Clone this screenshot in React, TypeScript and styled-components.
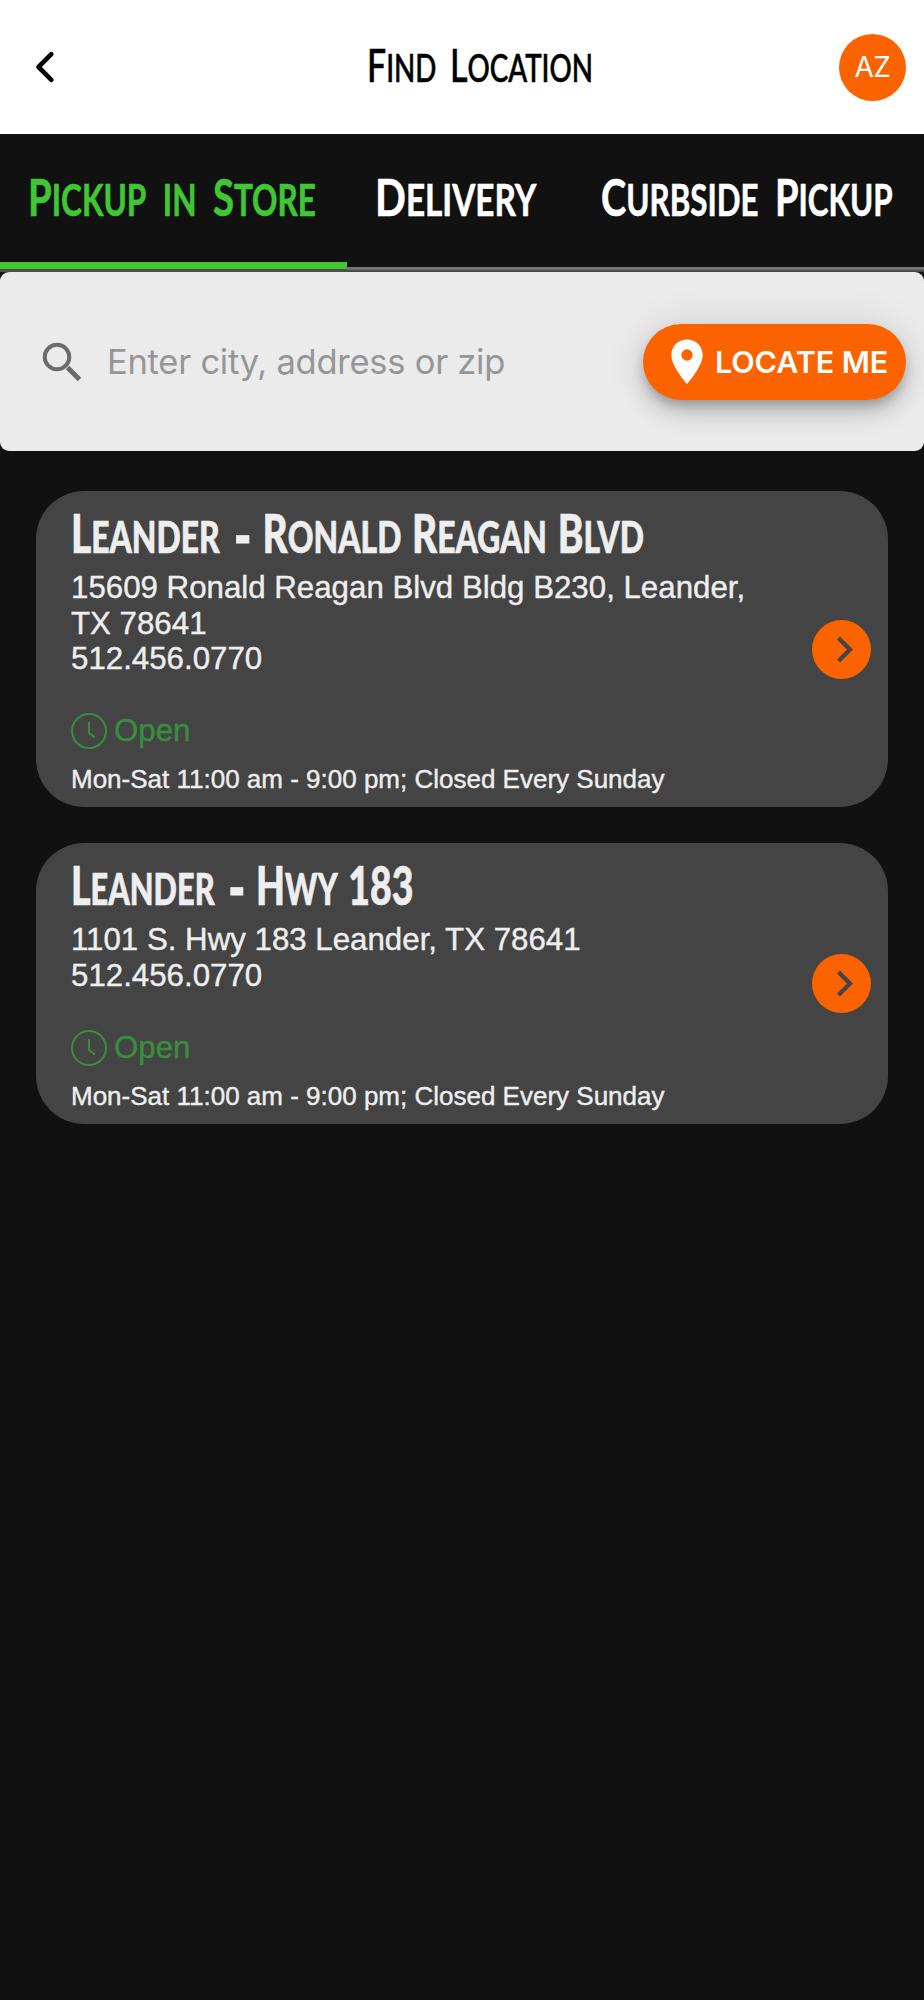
import React from "react";
import styled, { createGlobalStyle } from "styled-components";

const GlobalStyle = createGlobalStyle`
  *, *::before, *::after { box-sizing: border-box; }
  body { margin: 0; background: #111; }
  button, input { font: inherit; border: 0; background: none; padding: 0; margin: 0; }
`;

const Page = styled.div`
  width: 100%;
  min-height: 2000px;
  background: #111;
  color: #eee;
  font-family: "Liberation Sans", Arial, sans-serif;
  overflow-x: hidden;
`;

const Header = styled.header`
  display: grid;
  grid-template-columns: 333px 224px 1fr;
  align-items: center;
  height: 134px;
  padding: 0 18px 0 34px;
  background: #fff;
  color: #000;
`;

const BackButton = styled.button`
  display: flex;
  width: 22px;
  height: 34px;
`;

const Avatar = styled.div`
  display: flex;
  align-items: center;
  justify-content: center;
  justify-self: end;
  width: 67px;
  height: 67px;
  border-radius: 50%;
  background: #fb6200;
  color: #fff;
  font: 400 28px/67px Inter, sans-serif;
  letter-spacing: -0.5px;
`;

/* Condensed lettering: laid out at natural width, then squeezed into $width. */
const DisplayText = styled.span<{
  $size: number;
  $width: number;
  $height: number;
  $weight: number;
  $squeeze: number;
  $gap: number;
}>`
  display: block;
  flex: none;
  width: ${(p) => p.$width / p.$squeeze}px;
  height: ${(p) => p.$height}px;
  margin-right: ${(p) => p.$width - p.$width / p.$squeeze}px;
  font-family: Lato, sans-serif;
  font-size: ${(p) => p.$size}px;
  font-weight: ${(p) => p.$weight};
  line-height: ${(p) => p.$height}px;
  word-spacing: ${(p) => p.$gap}em;
  text-align: left;
  text-transform: uppercase;
  white-space: nowrap;
  transform: scaleX(${(p) => p.$squeeze});
  transform-origin: left center;
  -webkit-text-stroke: 0.6px currentColor;
`;

const Word = styled.span<{ $caps?: boolean }>`
  display: inline-block;
  line-height: 1;
  font-size: ${(p) => (p.$caps ? "1.22em" : "1em")};
`;

const CapWord = styled(Word)`
  &::first-letter { font-size: 1.22em; }
`;

const Dash = styled(Word)`
  margin: 0 0.1em 0 0.2em;
  transform: scale(1.5, 1.5);
  transform-origin: center 62%;
`;

type DisplayProps = {
  text: string;
  size: number;
  width: number;
  height: number;
  weight: number;
  squeeze: number;
  gap?: number;
};

function DisplayWord({ word }: { word: string }) {
  if (word === "-") return <Dash>{word}</Dash>;
  if (/^[A-Z]/.test(word)) return <CapWord>{word}</CapWord>;
  return <Word $caps={/^\d/.test(word)}>{word}</Word>;
}

function Display({ text, size, width, height, weight, squeeze, gap = 0.28 }: DisplayProps) {
  return (
    <DisplayText $size={size} $width={width} $height={height} $weight={weight} $squeeze={squeeze} $gap={gap}>
      {text.split(" ").map((word, i) => (
        <React.Fragment key={i}>
          {i > 0 && " "}
          <DisplayWord word={word} />
        </React.Fragment>
      ))}
    </DisplayText>
  );
}

const Tabs = styled.nav`
  display: grid;
  grid-template-columns: 347px 218px 1fr;
  height: 138px;
`;

const Tab = styled.button<{ $active?: boolean }>`
  display: flex;
  align-items: flex-start;
  padding: 36px 0 0 28px;
  color: ${(p) => (p.$active ? "#40c733" : "#fff")};
  box-shadow: ${(p) =>
    p.$active ? "inset 0 -3px #4d4b4d, inset 0 -10px #40c733" : "inset 0 -2px #4b4a4b, inset 0 -5px #747174"};

  &:last-child { padding-left: 36px; }
`;

const SearchPanel = styled.section`
  display: flex;
  align-items: center;
  height: 179px;
  padding: 0 18px 0 42px;
  border-radius: 9px;
  background: #ebebeb;
  overflow: hidden;
`;

const SearchInput = styled.input`
  flex: 1;
  min-width: 0;
  height: 70px;
  margin-left: 25px;
  outline: 0;
  color: #333;
  font: 400 34.5px/70px Inter, sans-serif;
  letter-spacing: -0.25px;
  &::placeholder { color: #969696; opacity: 1; }
`;

const LocateButton = styled.button`
  display: flex;
  align-items: center;
  gap: 12px;
  width: 263px;
  height: 76px;
  padding-left: 28px;
  border-radius: 38px;
  background: #fb6200;
  color: #fff;
  font: 600 30.5px/76px Inter, sans-serif;
  letter-spacing: -0.1px;
  white-space: nowrap;
  box-shadow: 0 7px 11px -2px rgba(0, 0, 0, 0.2), 0 13px 22px rgba(0, 0, 0, 0.14), 0 2px 40px rgba(0, 0, 0, 0.12);
`;

const List = styled.main`
  display: flex;
  flex-direction: column;
  gap: 36px;
  padding: 40px 36px;
`;

const Card = styled.article`
  display: flex;
  align-items: center;
  justify-content: space-between;
  padding: 16px 17px 12px 35px;
  border-radius: 48px;
  background: #444;
`;

const Details = styled.div`
  width: 690px;
`;

const Address = styled.p`
  margin: 9px 0 36px;
  font-size: 31.25px;
  line-height: 35.7px;
  -webkit-text-stroke: 0.4px currentColor;
`;

const Line = styled.span`
  display: block;
  white-space: nowrap;
`;

const Status = styled.div`
  display: flex;
  align-items: center;
  gap: 7px;
  height: 36px;
  color: #388e3c;
  font-size: 31.25px;
  line-height: 36px;
  -webkit-text-stroke: 0.4px currentColor;
`;

const Hours = styled.p`
  margin: 15px 0 0;
  font-size: 26px;
  line-height: 31px;
  white-space: nowrap;
  -webkit-text-stroke: 0.4px currentColor;
`;

const GoButton = styled.button`
  display: flex;
  flex: none;
  width: 59px;
  height: 59px;
  margin-bottom: 4px;
  border-radius: 50%;
  background: #fb6200;
`;

const ClockIcon = () => (
  <svg width="36" height="36" viewBox="0 0 36 36" fill="none" stroke="currentColor" strokeWidth="2">
    <circle cx="18" cy="18" r="17" />
    <path d="M18 9v11l6 4.5" />
  </svg>
);

const stores = [
  {
    name: "Leander - Ronald Reagan Blvd",
    width: 574,
    squeeze: 0.74,
    address: ["15609 Ronald Reagan Blvd Bldg B230, Leander,", "TX 78641"],
  },
  { name: "Leander - Hwy 183", width: 344, squeeze: 0.715, address: ["1101 S. Hwy 183 Leander, TX 78641"] },
];

export default function App() {
  return (
    <Page>
      <GlobalStyle />
      <Header>
        <BackButton aria-label="Back">
          <svg width="22" height="34" viewBox="0 0 22 34" fill="none" stroke="#000" strokeWidth="4.6" strokeLinecap="round" strokeLinejoin="round">
            <path d="M17.3 4.2 4.5 17l12.8 12.8" />
          </svg>
        </BackButton>
        <Display text="Find Location" size={38} width={224} height={52} weight={500} squeeze={0.73} gap={0.24} />
        <Avatar>AZ</Avatar>
      </Header>
      <Tabs>
        <Tab $active>
          <Display text="Pickup in Store" size={43} width={287} height={50} weight={700} squeeze={0.732} />
        </Tab>
        <Tab>
          <Display text="Delivery" size={43} width={162} height={50} weight={700} squeeze={0.774} />
        </Tab>
        <Tab>
          <Display text="Curbside Pickup" size={43} width={290} height={50} weight={700} squeeze={0.728} />
        </Tab>
      </Tabs>
      <SearchPanel>
        <svg width="40" height="40" viewBox="0 0 40 40" fill="none" stroke="#6b6b6b">
          <circle cx="15" cy="15" r="12.3" strokeWidth="4" />
          <path d="m25.5 25.5 12 12" strokeWidth="5" />
        </svg>
        <SearchInput placeholder="Enter city, address or zip" />
        <LocateButton>
          <svg width="32" height="46" viewBox="0 0 32 46" fill="#fff">
            <path fillRule="evenodd" d="M16 .5C7.2.5.3 7.3.3 16c0 11.6 15.7 29 15.7 29s15.7-17.4 15.7-29C31.7 7.3 24.8.5 16 .5Zm0 21.2a5.7 5.7 0 1 1 0-11.4 5.7 5.7 0 0 1 0 11.4Z" />
          </svg>
          LOCATE ME
        </LocateButton>
      </SearchPanel>
      <List>
        {stores.map((store) => (
          <Card key={store.name}>
            <Details>
              <Display
                text={store.name}
                size={43}
                width={store.width}
                height={54}
                weight={900}
                squeeze={store.squeeze}
                gap={0.1}
              />
              <Address>
                {store.address.map((line) => (
                  <Line key={line}>{line}</Line>
                ))}
                <Line>512.456.0770</Line>
              </Address>
              <Status>
                <ClockIcon />
                Open
              </Status>
              <Hours>Mon-Sat 11:00 am - 9:00 pm; Closed Every Sunday</Hours>
            </Details>
            <GoButton aria-label="Choose store">
              <svg width="59" height="59" viewBox="0 0 59 59" fill="none" stroke="#444" strokeWidth="4.2">
                <path d="m26.5 18 11.5 11.5L26.5 41" />
              </svg>
            </GoButton>
          </Card>
        ))}
      </List>
    </Page>
  );
}
